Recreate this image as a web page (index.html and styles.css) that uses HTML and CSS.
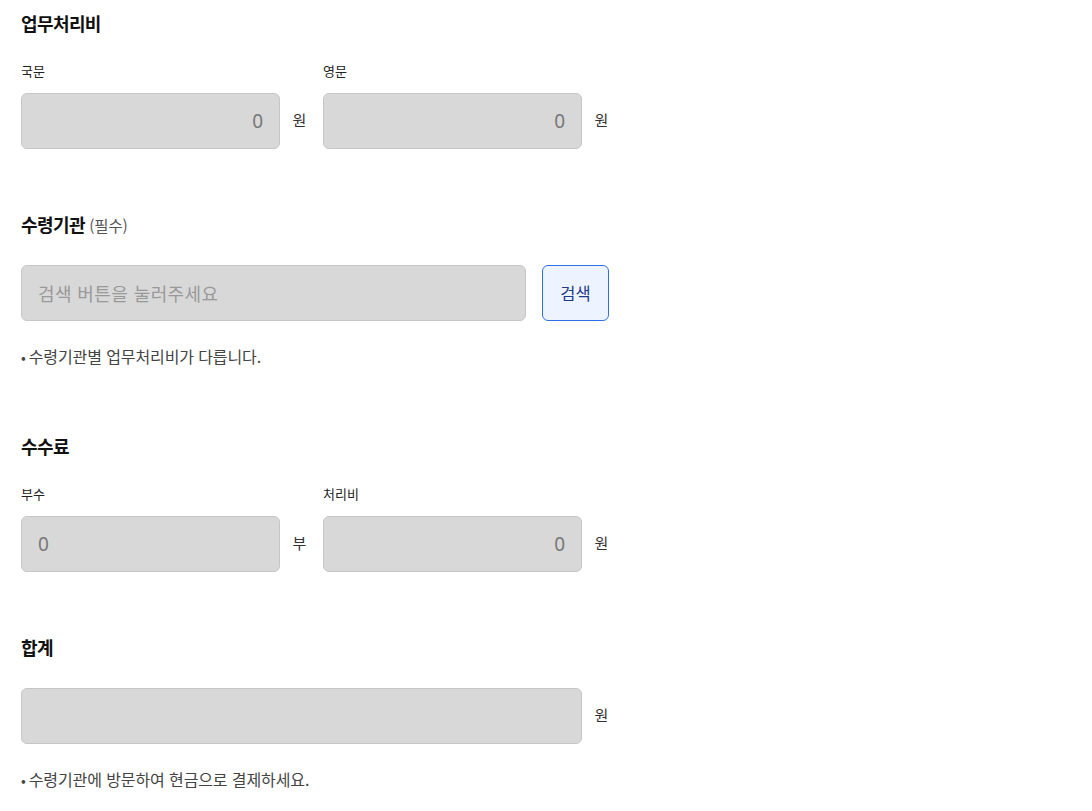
FILE: index.html
```html
<!DOCTYPE html>
<html lang="ko">
<head>
<meta charset="utf-8">
<title>업무처리비</title>
<link rel="stylesheet" href="styles.css">
</head>
<body>
<main class="form">
  <section class="section first">
    <h2 class="title">업무처리비</h2>
    <div class="grid2">
      <div class="field">
        <div class="label">국문</div>
        <div class="row">
          <div class="input num">0</div>
          <span class="unit">원</span>
        </div>
      </div>
      <div class="field">
        <div class="label">영문</div>
        <div class="row">
          <div class="input num">0</div>
          <span class="unit">원</span>
        </div>
      </div>
    </div>
  </section>

  <section class="section">
    <h2 class="title">수령기관 <span class="req">(필수)</span></h2>
    <div class="row search-row">
      <div class="input placeholder">검색 버튼을 눌러주세요</div>
      <button class="btn" type="button">검색</button>
    </div>
    <p class="note"><span class="dot">•</span>수령기관별 업무처리비가 다릅니다.</p>
  </section>

  <section class="section">
    <h2 class="title">수수료</h2>
    <div class="grid2">
      <div class="field">
        <div class="label">부수</div>
        <div class="row">
          <div class="input left">0</div>
          <span class="unit">부</span>
        </div>
      </div>
      <div class="field">
        <div class="label">처리비</div>
        <div class="row">
          <div class="input num">0</div>
          <span class="unit">원</span>
        </div>
      </div>
    </div>
  </section>

  <section class="section">
    <h2 class="title">합계</h2>
    <div class="row">
      <div class="input num"></div>
      <span class="unit">원</span>
    </div>
    <p class="note"><span class="dot">•</span>수령기관에 방문하여 현금으로 결제하세요.</p>
  </section>
</main>
</body>
</html>
```

FILE: styles.css
```css
* { box-sizing: border-box; }
html, body { margin: 0; padding: 0; background: #fff; }
body {
  font-family: "Noto Sans CJK KR", "Noto Sans", sans-serif;
  color: #222;
}
.form {
  width: 588px;
  margin-left: 21px;
  padding-top: 12px;
}
.section { margin-top: 64px; }
.section.first { margin-top: 0; }
.title {
  margin: 0;
  height: 26px;
  line-height: 22px;
  font-size: 18px;
  font-weight: 700;
  letter-spacing: -0.6px;
  color: #111;
}
.req {
  font-size: 15.5px;
  font-weight: 400;
  color: #555;
  letter-spacing: -0.2px;
}
.grid2 {
  display: grid;
  grid-template-columns: 1fr 1fr;
  column-gap: 16px;
  margin-top: 23px;
}
.label {
  height: 20px;
  line-height: 20px;
  font-size: 13px;
  color: #222;
  margin-bottom: 12px;
}
.row {
  display: flex;
  align-items: center;
}
.section > .row { margin-top: 26px; }
.input {
  flex: 1;
  height: 56px;
  background: #d8d8d8;
  border: 1px solid #c6c6c6;
  border-radius: 6px;
  padding: 0 16px;
  display: flex;
  align-items: center;
  font-family: "Noto Sans", "Noto Sans CJK KR", sans-serif;
  font-size: 19px;
  color: #777;
}
.input.num { justify-content: flex-end; }
.input.left { justify-content: flex-start; }
.input.placeholder {
  font-family: "Noto Sans CJK KR", sans-serif;
  font-size: 18px;
  letter-spacing: 0.4px;
  color: #999;
}
.unit {
  width: 15px;
  margin-left: 12px;
  margin-bottom: 4px;
  text-align: center;
  font-size: 15px;
  color: #333;
}
.search-row { gap: 16px; }
.btn {
  width: 67px;
  height: 56px;
  background: #eef4ff;
  border: 1px solid #2f6fe4;
  border-radius: 6px;
  font-family: "Noto Sans CJK KR", sans-serif;
  font-size: 16.5px;
  color: #1e3a8a;
  padding: 0;
  cursor: pointer;
}
.note {
  margin: 23px 0 0;
  height: 24px;
  line-height: 24px;
  font-size: 16px;
  color: #444;
  letter-spacing: -0.1px;
}
.section:has(.note) + .section { margin-top: 67px; }
.dot {
  font-size: 14px;
  margin-right: 3px;
  color: #444;
}
```
